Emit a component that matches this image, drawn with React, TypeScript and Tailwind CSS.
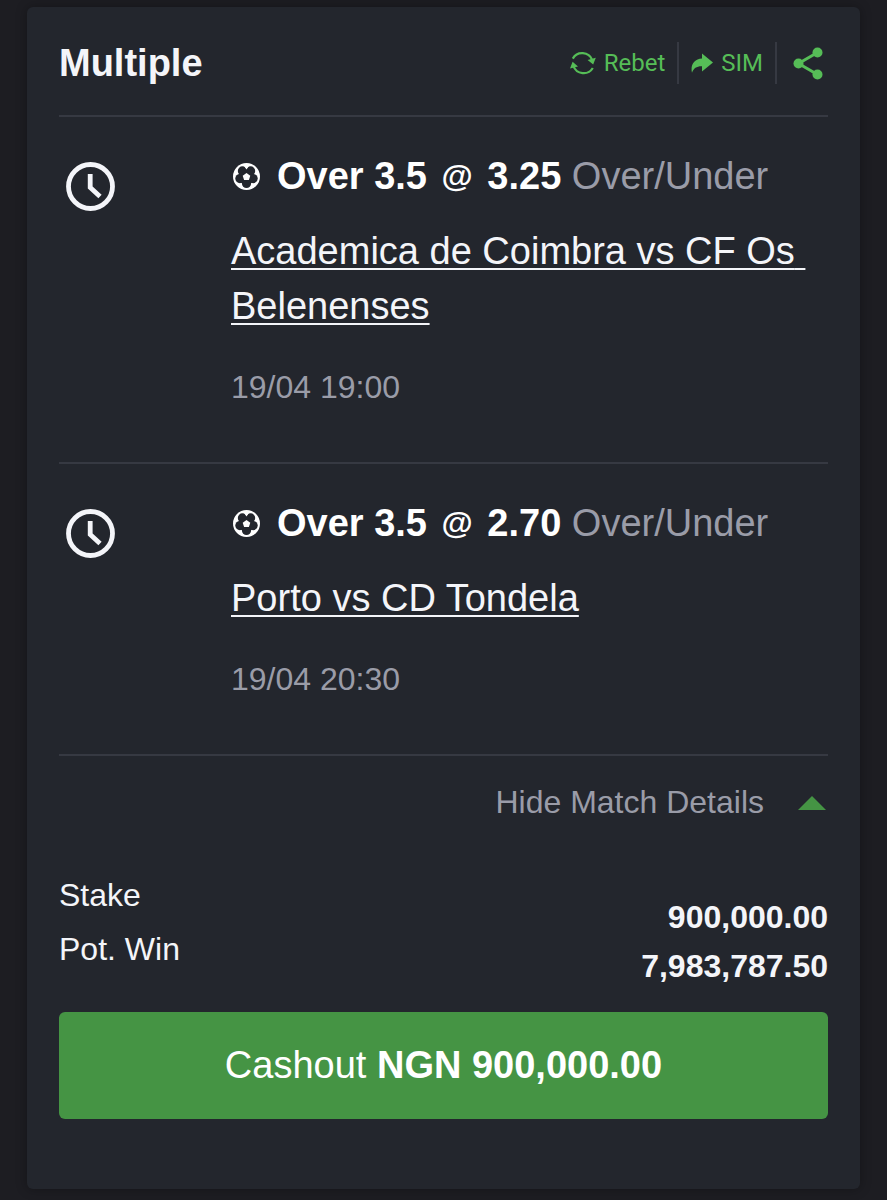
import type { ReactNode } from 'react';

type Selection = {
    id: number;
    pick: string;
    odds: string;
    market: string;
    match: string;
    kickoff: string;
};

const selections: Selection[] = [
    { id: 1, pick: 'Over 3.5', odds: '3.25', market: 'Over/Under', match: 'Academica de Coimbra vs CF Os Belenenses', kickoff: '19/04 19:00' },
    { id: 2, pick: 'Over 3.5', odds: '2.70', market: 'Over/Under', match: 'Porto vs CD Tondela', kickoff: '19/04 20:30' }
];

// Icons
const ClockIcon = () => (
    <svg viewBox="0 0 50 50" className="w-[50px] h-[50px]" fill="none" stroke="currentColor" aria-hidden="true">
        <circle cx="24.5" cy="24.5" r="22" strokeWidth="4.8" />
        <path d="M24.2 12V25.5l9.8 9" strokeWidth="4.8" />
    </svg>
);

const BallIcon = () => (
    <svg viewBox="0 0 30 30" className="w-[30px] h-[30px]" aria-hidden="true">
        <circle cx="15.5" cy="14.5" r="13.5" fill="white" />
        <g fill="#23262d">
            <circle cx="15.5" cy="14.5" r="8" />
            <circle cx="15.5" cy="21.5" r="4.6" />
            <circle cx="8.9" cy="16.6" r="4.6" />
            <circle cx="11.4" cy="8.9" r="4.6" />
            <circle cx="19.6" cy="8.9" r="4.6" />
            <circle cx="22.1" cy="16.6" r="4.6" />
        </g>
        <path fill="white" d="M12.5 3h6l-3 4.4zM15.5 10.9l3.8 2.8-1.4 4.4h-4.800l-1.400-4.400z" />
    </svg>
);

const RebetIcon = () => (
    <svg viewBox="0 0 26 24" className="w-[26px] h-6" fill="none" aria-hidden="true">
        <path d="M2.8 7.6A10.8 10.8 0 0 1 22.2 9M22.8 17A10.8 10.8 0 0 1 3.4 15" stroke="currentColor" strokeWidth="2.2" />
        <path fill="currentColor" d="M17.6 9l8.2-2.2-2.6 6.6zM8 15.6L0 17.6l2.6-6.8z" />
    </svg>
);

const ForwardIcon = () => (
    <svg viewBox="0 0 22 20" className="w-[22px] h-5" fill="currentColor" aria-hidden="true">
        <path d="M11 .5l11 9-11 9v-5.3C6 13 2.5 15 1 19.8-.8 12 3.2 5.9 11 5.6z" />
    </svg>
);

const ShareIcon = () => (
    <svg viewBox="0 0 30 33" className="w-[30px] h-[33px]" fill="currentColor" aria-hidden="true">
        <path d="M24.5 5.5l-19 11 19 11" fill="none" stroke="currentColor" strokeWidth="3" />
        <circle cx="24.5" cy="5.5" r="5" />
        <circle cx="5.5" cy="16.5" r="5" />
        <circle cx="24.5" cy="27.5" r="5" />
    </svg>
);

const HeaderAction = ({ icon, label }: { icon: ReactNode; label: string }) => (
    <button type="button" className="flex items-center gap-2 h-full pr-3 border-r-2 border-[#363942]">
        {icon}
        {label}
    </button>
);

const SelectionRow = ({ selection }: { selection: Selection }) => (
    <li className="flex pt-8 pb-[47px] border-b-2 border-[#363942]">
        <div className="w-[172px] shrink-0 pl-[7px] pt-[13px]">
            <ClockIcon />
        </div>
        <div className="flex-1 min-w-0">
            <div className="flex items-center gap-4">
                <BallIcon />
                <p className="text-[#9a9ca8]">
                    <strong className="text-white">
                        {selection.pick} <span className="mx-1 align-[2px] text-[32px] leading-none">@</span> {selection.odds}
                    </strong>{' '}
                    {selection.market}
                </p>
            </div>
            <a href="#match" className="block mt-5 whitespace-pre-wrap underline decoration-2 underline-offset-4">
                {selection.match}
            </a>
            <p className="mt-[26px] text-[32px] leading-[55px] text-[#9a9ca8]">{selection.kickoff}</p>
        </div>
    </li>
);

export default function App() {
    return (
        <div className="min-h-screen bg-[#1d1d22] px-[27px] pt-[7px] pb-[11px] font-['Liberation_Sans',Arial,sans-serif] text-[38px] leading-[55px] text-[#f4f5f9]">
            <main className="rounded-md bg-[#23262d] px-8 pb-[70px] shadow-[0_0_12px_rgba(0,0,0,0.3)]">
                {/* Header */}
                <header className="flex items-center justify-between pt-[35px] pb-[31px] border-b-2 border-[#363942]">
                    <h1 className="font-bold leading-[42px]">Multiple</h1>
                    <div className="flex items-center gap-3 h-[42px] font-['Roboto',sans-serif] text-2xl text-[#56bd57]">
                        <HeaderAction icon={<RebetIcon />} label="Rebet" />
                        <HeaderAction icon={<ForwardIcon />} label="SIM" />
                        <button type="button" aria-label="Share" className="pl-1 pr-[5px]">
                            <ShareIcon />
                        </button>
                    </div>
                </header>

                {/* Selections */}
                <ul>
                    {selections.map((selection) => (
                        <SelectionRow key={selection.id} selection={selection} />
                    ))}
                </ul>

                <button type="button" className="flex items-center gap-[34px] ml-auto mr-0.5 pt-[22px] text-[32px] leading-[48px] text-[#9a9ca8]">
                    Hide Match Details
                    <svg viewBox="0 0 28 16" className="w-7 h-4" fill="#459444" aria-hidden="true">
                        <path d="M14 2l14 14H0z" />
                    </svg>
                </button>

                {/* Totals */}
                <div className="flex justify-between mt-[42px] text-[32px]">
                    <div className="leading-[54px]">
                        <p>Stake</p>
                        <p>Pot. Win</p>
                    </div>
                    <div className="mt-[25px] text-right font-bold leading-[49px]">
                        <p>900,000.00</p>
                        <p>7,983,787.50</p>
                    </div>
                </div>

                <button type="button" className="w-full mt-[21px] py-[26px] rounded-md bg-[#459444] text-white">
                    Cashout <strong>NGN 900,000.00</strong>
                </button>
            </main>
        </div>
    );
}
